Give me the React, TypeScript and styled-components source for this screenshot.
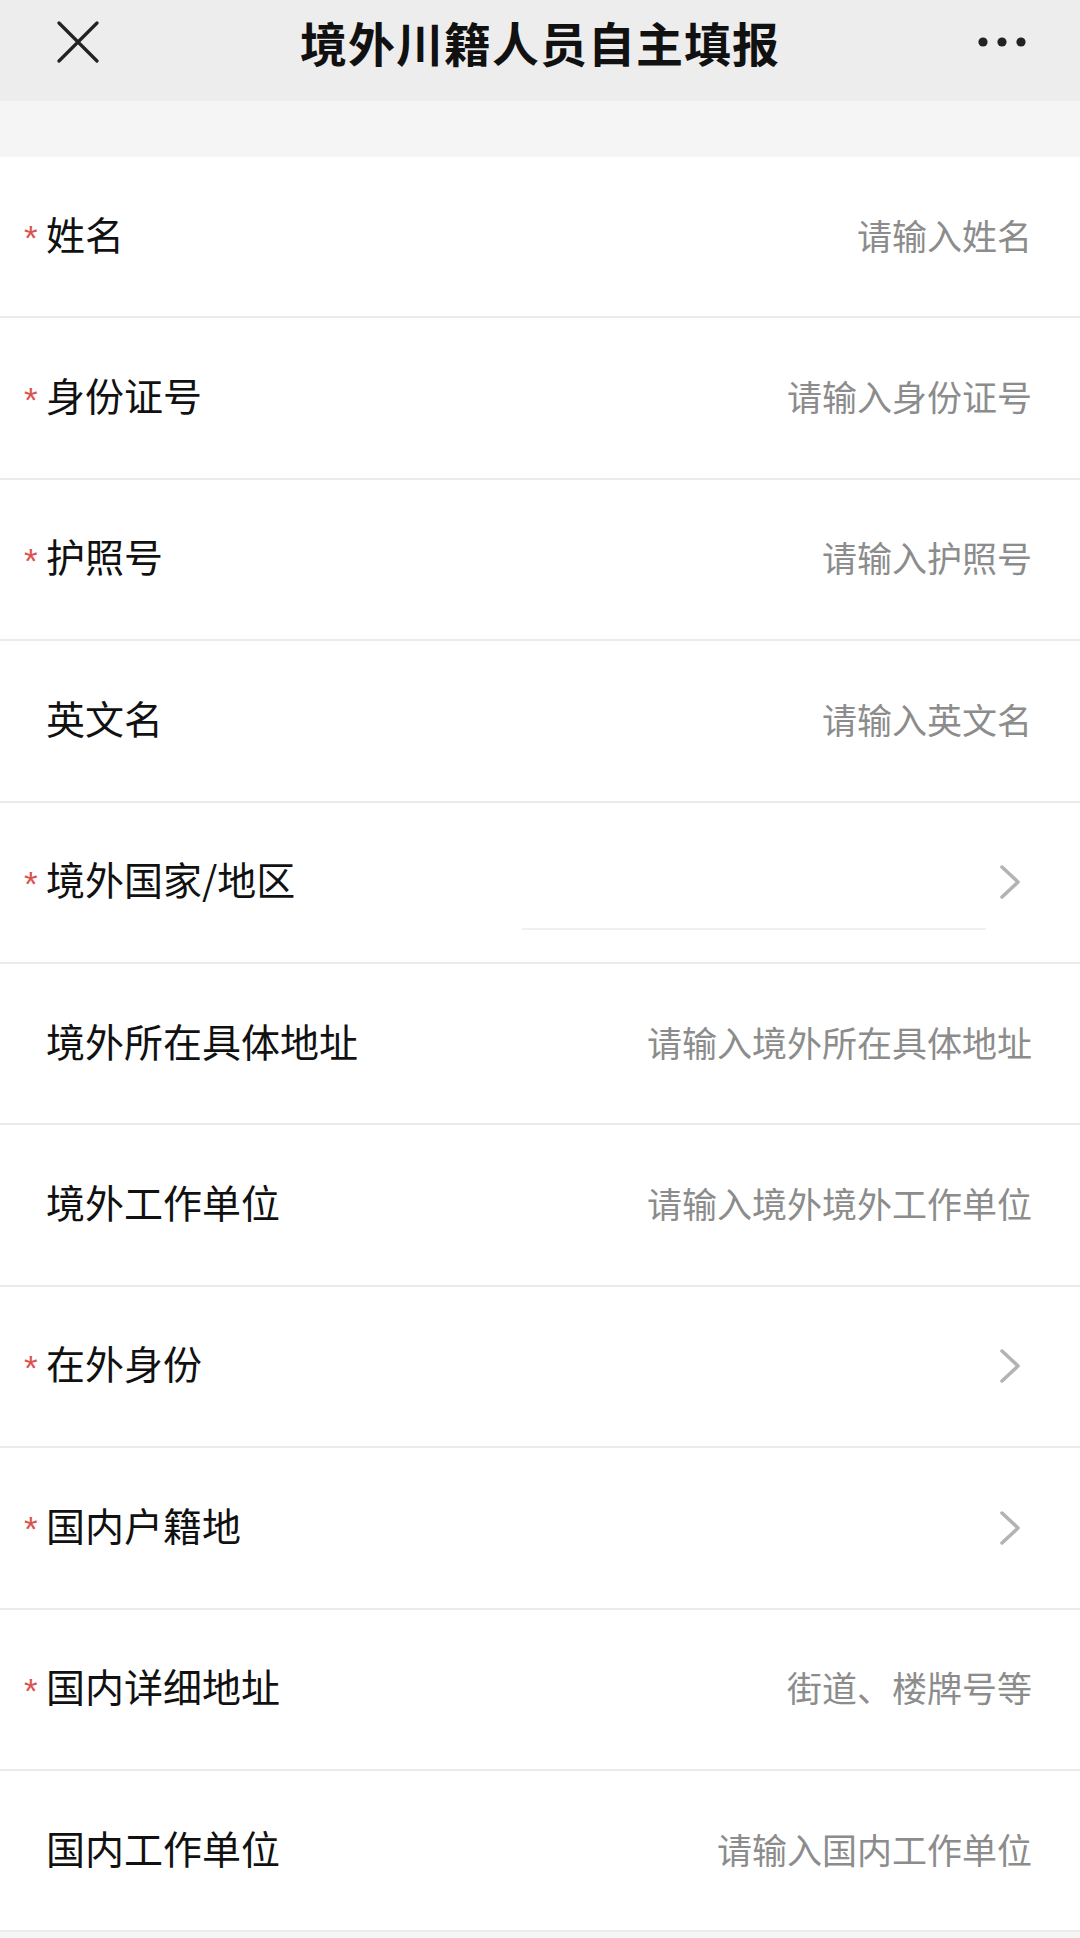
import React from 'react';
import styled, { createGlobalStyle } from 'styled-components';

const GlobalStyle = createGlobalStyle`
  body {
    margin: 0;
    background: #f5f5f5;
    font-family: "Noto Sans CJK SC", "Noto Sans", sans-serif;
  }
`;

const Page = styled.div`
  width: 1080px;
  min-height: 1938px;
  background: #f5f5f5;
`;

const Header = styled.div`
  height: 101px;
  background: #ededed;
  display: flex;
  align-items: center;
  justify-content: space-between;
  padding: 0 52px 18px 52px;
  box-sizing: border-box;
`;

const Title = styled.h1`
  margin: 0;
  font-size: 47px;
  font-weight: 700;
  letter-spacing: 1px;
  color: #111;
  line-height: 1;
`;

const IconButton = styled.div`
  width: 52px;
  height: 52px;
  display: flex;
  align-items: center;
  justify-content: center;
`;

const Spacer = styled.div`
  height: 56px;
`;

const List = styled.div`
  background: #fff;
`;

const Row = styled.div`
  height: 159.4px;
  border-bottom: 2px solid #ebebeb;
  display: flex;
  align-items: center;
  padding: 0 48px 0 24px;
  box-sizing: content-box;
  background: #fff;
`;

const Required = styled.span<{ $show: boolean }>`
  width: 22px;
  flex: none;
  color: #d9534f;
  font-family: "Liberation Sans", sans-serif;
  font-size: 35px;
  line-height: 1;
  padding-top: 2px;
  visibility: ${(p) => (p.$show ? 'visible' : 'hidden')};
`;

const Label = styled.span`
  font-size: 39px;
  color: #111;
  white-space: nowrap;
  line-height: 1;
  padding-bottom: 7px;
`;

const Input = styled.input`
  flex: 1;
  min-width: 0;
  border: none;
  outline: none;
  background: transparent;
  text-align: right;
  font-family: inherit;
  font-size: 35px;
  color: #333;
  padding: 0 0 5px 0;

  &::placeholder {
    color: #8c8c8c;
  }
`;

const SelectBox = styled.div<{ $underline: boolean }>`
  width: 464px;
  margin-left: auto;
  align-self: flex-end;
  height: 36px;
  margin-bottom: 32px;
  border-bottom: 2px solid ${(p) => (p.$underline ? '#f0f0f0' : 'transparent')};
`;

const Chevron = styled.svg`
  flex: none;
  margin-left: 13px;
  margin-right: 11px;
`;

type Field = {
  label: string;
  required: boolean;
  placeholder?: string;
  select?: boolean;
  underline?: boolean;
};

const fields: Field[] = [
  { label: '姓名', required: true, placeholder: '请输入姓名' },
  { label: '身份证号', required: true, placeholder: '请输入身份证号' },
  { label: '护照号', required: true, placeholder: '请输入护照号' },
  { label: '英文名', required: false, placeholder: '请输入英文名' },
  { label: '境外国家/地区', required: true, select: true, underline: true },
  { label: '境外所在具体地址', required: false, placeholder: '请输入境外所在具体地址' },
  { label: '境外工作单位', required: false, placeholder: '请输入境外境外工作单位' },
  { label: '在外身份', required: true, select: true },
  { label: '国内户籍地', required: true, select: true },
  { label: '国内详细地址', required: true, placeholder: '街道、楼牌号等' },
  { label: '国内工作单位', required: false, placeholder: '请输入国内工作单位' },
];

const App = () => {
  return (
    <Page>
      <GlobalStyle />
      <Header>
        <IconButton>
          <svg width="42" height="42" viewBox="0 0 42 42">
            <path d="M2 2 L40 40 M40 2 L2 40" stroke="#222" strokeWidth="3.2" strokeLinecap="round" />
          </svg>
        </IconButton>
        <Title>境外川籍人员自主填报</Title>
        <IconButton>
          <svg width="50" height="12" viewBox="0 0 50 12">
            <circle cx="6" cy="6" r="4.6" fill="#222" />
            <circle cx="25" cy="6" r="4.6" fill="#222" />
            <circle cx="44" cy="6" r="4.6" fill="#222" />
          </svg>
        </IconButton>
      </Header>
      <Spacer />
      <List>
        {fields.map((f) => (
          <Row key={f.label}>
            <Required $show={f.required}>*</Required>
            <Label>{f.label}</Label>
            {f.select ? (
              <>
                <SelectBox $underline={!!f.underline} />
                <Chevron width="22" height="36" viewBox="0 0 22 36">
                  <path d="M3 3 L19 18 L3 33" fill="none" stroke="#b3b3b3" strokeWidth="3.5" strokeLinecap="round" strokeLinejoin="round" />
                </Chevron>
              </>
            ) : (
              <Input placeholder={f.placeholder} />
            )}
          </Row>
        ))}
      </List>
    </Page>
  );
};

export default App;
